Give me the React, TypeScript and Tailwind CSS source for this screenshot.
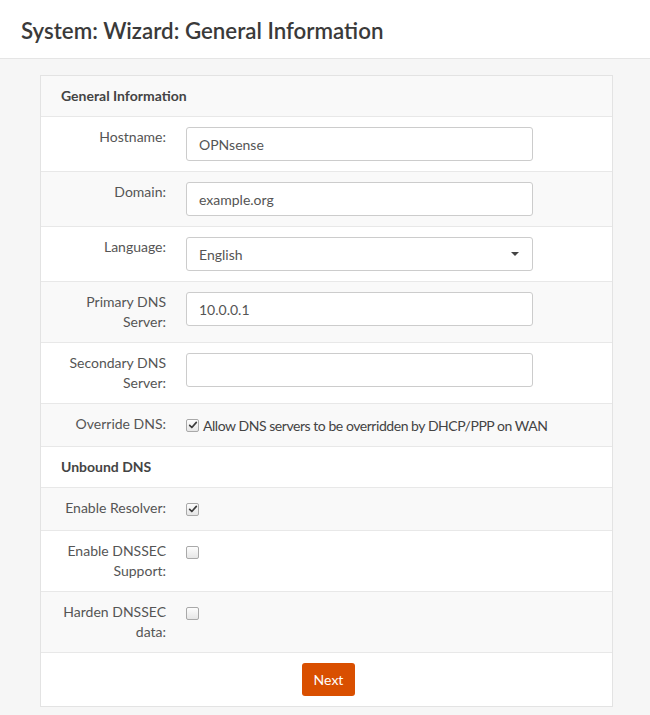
import type { ReactNode } from 'react';

const font = { fontFamily: '"Source Sans Pro", Lato, "Liberation Sans", sans-serif' };

function CheckBox({ checked }: { checked: boolean }) {
  return (
    <span className="inline-flex h-[13px] w-[13px] shrink-0 items-center justify-center rounded-[2px] border border-[#a9a9a9] bg-[linear-gradient(#fdfdfd,#e6e6e6)]">
      {checked && (
        <svg viewBox="0 0 12 12" className="h-[10px] w-[10px]">
          <path d="M2 6.5 4.6 9 10 2.8" fill="none" stroke="#3b3b3b" strokeWidth="2" strokeLinecap="round" strokeLinejoin="round" />
        </svg>
      )}
    </span>
  );
}

function Row({ label, striped, children }: { label: ReactNode; striped: boolean; children: ReactNode }) {
  return (
    <div className={`grid grid-cols-[135px_1fr] border-t border-[#e8e8e8] pt-[10px] pb-[10px] ${striped ? 'bg-[#f9f9f9]' : 'bg-white'}`}>
      <div className="pl-[20px] pr-[10px] text-right text-[14px] leading-[20px] text-[#555]">{label}</div>
      <div className="pl-[10px]">{children}</div>
    </div>
  );
}

function TextInput({ value }: { value: string }) {
  return (
    <div className="flex h-[34px] w-[347px] items-center rounded-[3px] border border-[#cccccc] bg-white px-[12px] text-[14px] text-[#555]">
      {value}
    </div>
  );
}

function SectionHeader({ title, striped, first }: { title: string; striped: boolean; first?: boolean }) {
  return (
    <div className={`${first ? '' : 'border-t border-[#e8e8e8]'} px-[20px] py-[10px] text-[14px] font-bold leading-[20px] text-[#444] ${striped ? 'bg-[#f9f9f9]' : 'bg-white'}`}>
      {title}
    </div>
  );
}

export default function App() {
  return (
    <div className="min-h-[715px] bg-[#f6f6f6]" style={font}>
      <header className="h-[59px] border-b border-[#e5e5e5] bg-white px-[21px] pt-[17px]">
        <h1 className="text-[22.3px] font-semibold leading-[28px] text-[#3a3a3a]">System: Wizard: General Information</h1>
      </header>

      <main className="pt-[16px]">
        <section className="ml-[40px] w-[573px] border border-[#e3e3e3] bg-white">
          <SectionHeader title="General Information" striped first />
          <Row label="Hostname:" striped={false}>
            <TextInput value="OPNsense" />
          </Row>
          <Row label="Domain:" striped>
            <TextInput value="example.org" />
          </Row>
          <Row label="Language:" striped={false}>
            <div className="flex h-[34px] w-[347px] items-center justify-between rounded-[3px] border border-[#cccccc] bg-white pl-[12px] pr-[13px] text-[14px] text-[#555]">
              <span>English</span>
              <span className="h-0 w-0 border-x-[4px] border-t-[4px] border-x-transparent border-t-[#444]" />
            </div>
          </Row>
          <Row label="Primary DNS Server:" striped>
            <TextInput value="10.0.0.1" />
          </Row>
          <Row label="Secondary DNS Server:" striped={false}>
            <TextInput value="" />
          </Row>
          <Row label="Override DNS:" striped>
            <div className="flex h-[22px] items-center gap-[4px] text-[14px] tracking-[-0.45px] text-[#444]">
              <CheckBox checked />
              <span>Allow DNS servers to be overridden by DHCP/PPP on WAN</span>
            </div>
          </Row>
          <SectionHeader title="Unbound DNS" striped={false} />
          <Row label="Enable Resolver:" striped>
            <div className="flex h-[22px] items-center">
              <CheckBox checked />
            </div>
          </Row>
          <Row label="Enable DNSSEC Support:" striped={false}>
            <div className="flex h-[22px] items-center">
              <CheckBox checked={false} />
            </div>
          </Row>
          <Row label="Harden DNSSEC data:" striped>
            <div className="flex h-[22px] items-center">
              <CheckBox checked={false} />
            </div>
          </Row>
          <div className="flex justify-center border-t border-[#e8e8e8] bg-white py-[10px] pl-[4px]">
            <button type="button" className="h-[33px] w-[53px] rounded-[3px] bg-[#d94f00] text-[14px] text-white">
              Next
            </button>
          </div>
        </section>
      </main>
    </div>
  );
}
